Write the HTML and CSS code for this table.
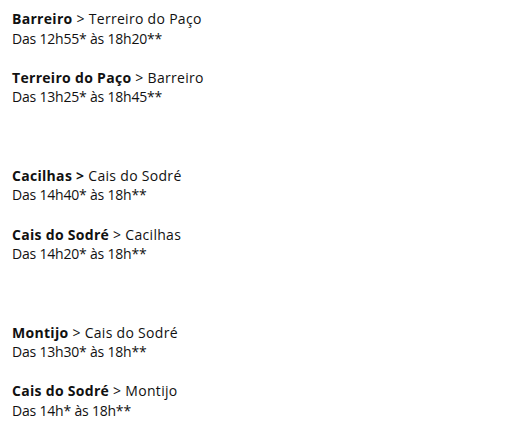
FILE: index.html
```html
<!DOCTYPE html>
<html lang="pt">
<head><meta charset="utf-8"><link rel="stylesheet" href="styles.css"></head>
<body>
<div class="schedule">
  <section class="group">
    <p class="route"><span class="name"><b>Barreiro</b> &gt; Terreiro do Paço</span><span class="time">Das 12h55* às 18h20**</span></p>
    <p class="route"><span class="name"><b>Terreiro do Paço</b> &gt; Barreiro</span><span class="time">Das 13h25* às 18h45**</span></p>
  </section>
  <section class="group">
    <p class="route"><span class="name"><b>Cacilhas &gt;</b> Cais do Sodré</span><span class="time">Das 14h40* às 18h**</span></p>
    <p class="route"><span class="name"><b>Cais do Sodré</b> &gt; Cacilhas</span><span class="time">Das 14h20* às 18h**</span></p>
  </section>
  <section class="group">
    <p class="route"><span class="name"><b>Montijo</b> &gt; Cais do Sodré</span><span class="time">Das 13h30* às 18h**</span></p>
    <p class="route"><span class="name"><b>Cais do Sodré</b> &gt; Montijo</span><span class="time">Das 14h* às 18h**</span></p>
  </section>
</div>
</body>
</html>
```
FILE: styles.css
```css
body {
  margin: 8px;
  color: #111;
  background: #fff;
  font-family: "Open Sans", sans-serif;
  font-size: 14px;
  line-height: 19.6px;
}
.schedule {
  display: flex;
  flex-direction: column;
  gap: 58.8px;
  padding: 1px 0 0 4px;
}
.group {
  display: flex;
  flex-direction: column;
  gap: 19.6px;
}
.route {
  margin: 0;
}
.route .name,
.route .time {
  display: block;
}
.route .name {
  letter-spacing: 0.3px;
}
.route .time {
  letter-spacing: -0.2px;
}
.route b {
  font-weight: 700;
}
```
